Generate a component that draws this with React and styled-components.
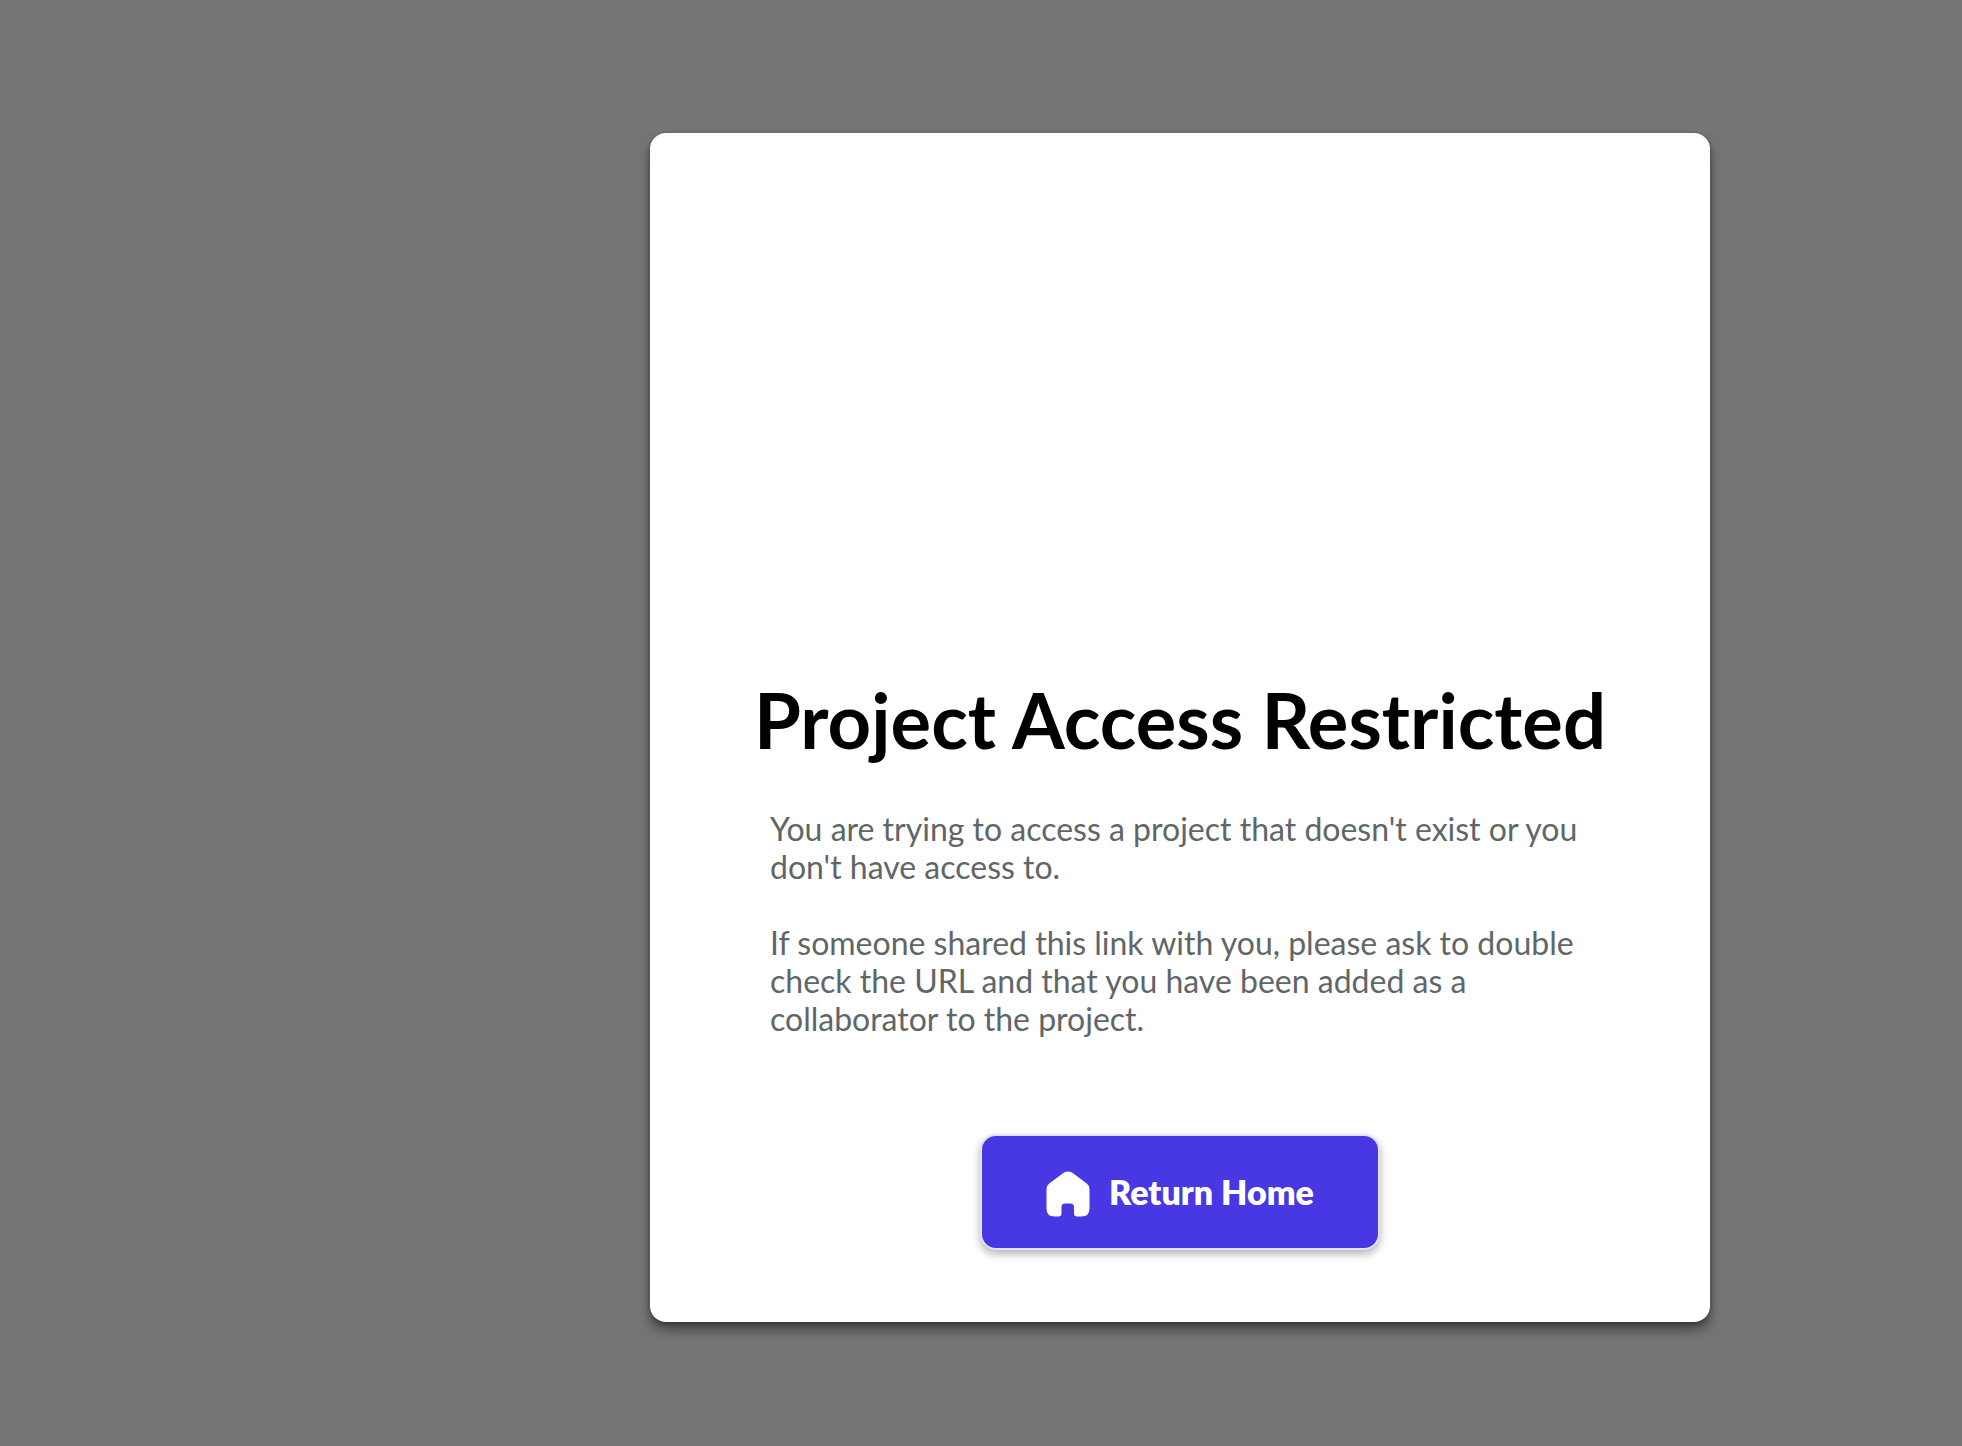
import React from "react";
import styled, { createGlobalStyle } from "styled-components";

const GlobalStyle = createGlobalStyle`
  *, *::before, *::after { box-sizing: border-box; }
  body {
    margin: 0;
    background: #757575;
    font-family: Lato, "Open Sans", sans-serif;
  }
`;

const Page = styled.main`
  display: flex;
  justify-content: center;
  min-height: 100vh;
  padding: 133px 0 124px 398px;
`;

const Card = styled.section`
  display: flex;
  flex-direction: column;
  align-items: center;
  width: 1060px;
  max-width: 100%;
  padding: 544px 96px 72px;
  border-radius: 16px;
  background: #ffffff;
  box-shadow: 0 8px 12px rgba(0, 0, 0, 0.4), 0 2px 4px rgba(0, 0, 0, 0.25);
`;

const Title = styled.h1`
  margin: 0;
  color: #000000;
  font-size: 76px;
  font-weight: 700;
  line-height: 86px;
  white-space: nowrap;
`;

const Message = styled.div`
  display: flex;
  flex-direction: column;
  gap: 38px;
  width: 820px;
  max-width: 100%;
  margin: 47px 0 96px;
`;

const Paragraph = styled.p`
  margin: 0;
  color: #5f6668;
  font-size: 32px;
  line-height: 38px;
`;

const HomeButton = styled.button`
  display: flex;
  align-items: center;
  justify-content: center;
  gap: 19px;
  width: 400px;
  height: 116px;
  border: 2px solid #e2e2fa;
  border-radius: 16px;
  background: #4838e3;
  box-shadow: 0 4px 8px rgba(0, 0, 0, 0.3);
  color: #ffffff;
  font: inherit;
  font-size: 34px;
  font-weight: 800;
  line-height: 40px;
  cursor: pointer;
`;

const Icon = styled.svg`
  display: block;
  flex: none;
  width: 44px;
  height: 46px;
  margin-top: 4px;
`;

function HomeIcon() {
  return (
    <Icon viewBox="0 0 44 46" aria-hidden="true">
      <path
        fill="#ffffff"
        d="M17.6 1.8 Q22 -1 26.4 1.8 L40.5 12.2 Q43.5 14.5 43.5 18 V37.5 Q43.5 45.5 35.5 45.5 H31 Q28 45.5 28 42.5 V36 Q28 32.5 24.5 32.5 H19 Q15.5 32.5 15.5 36 V42.5 Q15.5 45.5 12.5 45.5 H8.5 Q0.5 45.5 0.5 37.5 V18 Q0.5 14.5 3.5 12.2 Z"
      />
    </Icon>
  );
}

export default function App() {
  return (
    <>
      <GlobalStyle />
      <Page>
        <Card>
          <Title>Project Access Restricted</Title>
          <Message>
            <Paragraph>
              You are trying to access a project that doesn't exist or you don't have access to.
            </Paragraph>
            <Paragraph>
              If someone shared this link with you, please ask to double check the URL and that you
              have been added as a collaborator to the project.
            </Paragraph>
          </Message>
          <HomeButton type="button">
            <HomeIcon />
            Return Home
          </HomeButton>
        </Card>
      </Page>
    </>
  );
}
